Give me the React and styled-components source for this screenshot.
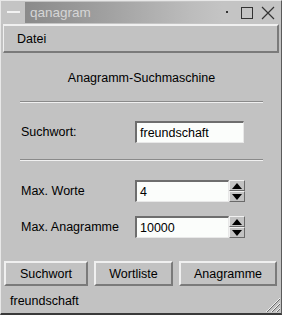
import React from 'react';
import styled, { createGlobalStyle } from 'styled-components';

const Global = createGlobalStyle`
  html, body { margin: 0; padding: 0; background: #c2c2c2; }
  body { font-family: "Liberation Sans", Arial, sans-serif; font-size: 12.5px; color: #000; }
`;

const Frame = styled.div`
  width: 282px;
  height: 315px;
  box-sizing: border-box;
  background: #c2c2c2;
  border-left: 1px solid #e8e8e8;
  border-top: 1px solid #e8e8e8;
  border-right: 1px solid #5a5a5a;
  border-bottom: 2px solid #3a3a3a;
  display: flex;
  flex-direction: column;
  position: relative;
`;

const TitleBar = styled.div`
  height: 23px;
  display: flex;
  align-items: center;
  padding: 0 6px 0 5px;
  background: #c4c4c4;
`;

const TitleStrip = styled.div`
  flex: 1;
  height: 21px;
  margin-left: 5px;
  display: flex;
  align-items: center;
  padding-left: 5px;
  background: linear-gradient(to right, #8a8a8a 0%, #a0a0a0 40%, #bdbdbd 85%, #c4c4c4 100%);
  color: #d6d6d6;
  font-size: 13.5px;
`;

const TitleButton = styled.div`
  width: ${p => p.w || 14}px;
  height: 14px;
  margin-left: ${p => p.gap || 0}px;
  display: flex;
  align-items: center;
  justify-content: center;
`;

const MenuBar = styled.div`
  margin: 0 2px;
  height: 29px;
  box-sizing: border-box;
  display: flex;
  align-items: center;
  padding-left: 13px;
  border-top: 2px solid #f0f0f0;
  border-left: 1px solid #f0f0f0;
  border-right: 2px solid #7a7a7a;
  border-bottom: 2px solid #7a7a7a;
`;

const Body = styled.div`
  flex: 1;
  display: flex;
  flex-direction: column;
  padding: 0 18px 0 19px;
`;

const Heading = styled.div`
  text-align: center;
  margin-top: 17px;
  height: 16px;
  line-height: 16px;
`;

const Rule = styled.div`
  height: 0;
  border-top: 1px solid #8a8a8a;
  border-bottom: 1px solid #f0f0f0;
  margin-top: ${p => p.mt}px;
`;

const Row = styled.div`
  display: flex;
  align-items: center;
  height: 22px;
  margin-top: ${p => p.mt}px;
`;

const Label = styled.div`
  width: 114px;
  padding-left: 1px;
`;

const Field = styled.div`
  width: ${p => p.w}px;
  height: 22px;
  box-sizing: border-box;
  background: #fbfdfb;
  border-top: 2px solid #6e6e6e;
  border-left: 2px solid #6e6e6e;
  border-right: 1px solid #e8e8e8;
  border-bottom: 1px solid #e8e8e8;
  padding-left: 3px;
  display: flex;
  align-items: center;
`;

const Spinner = styled.div`
  width: 16px;
  height: 22px;
  display: flex;
  flex-direction: column;
`;

const SpinHalf = styled.div`
  flex: 1;
  background: #c2c2c2;
  border-top: 1px solid #f0f0f0;
  border-left: 1px solid #f0f0f0;
  border-right: 1px solid #6a6a6a;
  border-bottom: 1px solid #6a6a6a;
  display: flex;
  align-items: center;
  justify-content: center;
`;

const ButtonRow = styled.div`
  display: flex;
  gap: 6px;
  padding: 0 4px 0 3px;
  height: 25px;
`;

const Button = styled.div`
  width: ${p => p.w}px;
  box-sizing: border-box;
  display: flex;
  align-items: center;
  justify-content: center;
  border-top: 2px solid #f0f0f0;
  border-left: 2px solid #f0f0f0;
  border-right: 2px solid #7a7a7a;
  border-bottom: 2px solid #7a7a7a;
`;

const Status = styled.div`
  height: 27px;
  box-sizing: border-box;
  display: flex;
  align-items: center;
  padding-left: 9px;
  padding-top: 3px;
`;

const Grip = styled.svg`
  position: absolute;
  right: 0;
  bottom: 0;
`;

const Arrow = ({ up }) => (
  <svg width="10" height="6" viewBox="0 0 10 6">
    <polygon points={up ? '5,0 10,6 0,6' : '0,0 10,0 5,6'} fill="#000" />
  </svg>
);

export default function App() {
  return (
    <Frame>
      <Global />
      <TitleBar>
        <TitleButton w={14}>
          <svg width="13" height="3"><rect x="0" y="0" width="13" height="2" fill="#f2f2f2" /></svg>
        </TitleButton>
        <TitleStrip>qanagram</TitleStrip>
        <TitleButton w={4} gap={2}>
          <svg width="3" height="3"><rect width="2" height="2" fill="#333" /></svg>
        </TitleButton>
        <TitleButton w={13} gap={11}>
          <svg width="12" height="12"><rect x="0.5" y="0.5" width="11" height="11" fill="none" stroke="#333" /></svg>
        </TitleButton>
        <TitleButton w={14} gap={8}>
          <svg width="14" height="14"><path d="M1 1L13 13M13 1L1 13" stroke="#333" strokeWidth="1.2" /></svg>
        </TitleButton>
      </TitleBar>
      <MenuBar>Datei</MenuBar>
      <Body>
        <Heading>Anagramm-Suchmaschine</Heading>
        <Rule mt={15} />
        <Row mt={18}>
          <Label>Suchwort:</Label>
          <Field w={109}>freundschaft</Field>
        </Row>
        <Rule mt={16} />
        <Row mt={19}>
          <Label>Max. Worte</Label>
          <Field w={94}>4</Field>
          <Spinner>
            <SpinHalf><Arrow up /></SpinHalf>
            <SpinHalf><Arrow /></SpinHalf>
          </Spinner>
        </Row>
        <Row mt={14}>
          <Label>Max. Anagramme</Label>
          <Field w={94}>10000</Field>
          <Spinner>
            <SpinHalf><Arrow up /></SpinHalf>
            <SpinHalf><Arrow /></SpinHalf>
          </Spinner>
        </Row>
      </Body>
      <ButtonRow>
        <Button w={84}>Suchwort</Button>
        <Button w={79}>Wortliste</Button>
        <Button w={98}>Anagramme</Button>
      </ButtonRow>
      <Status>freundschaft</Status>
      <Grip width="17" height="17" viewBox="0 0 17 17">
        <path d="M16 2L2 16M16 7L7 16M16 12L12 16" stroke="#f0f0f0" strokeWidth="1" />
        <path d="M16 3L3 16M16 8L8 16M16 13L13 16" stroke="#6a6a6a" strokeWidth="1" />
      </Grip>
    </Frame>
  );
}
